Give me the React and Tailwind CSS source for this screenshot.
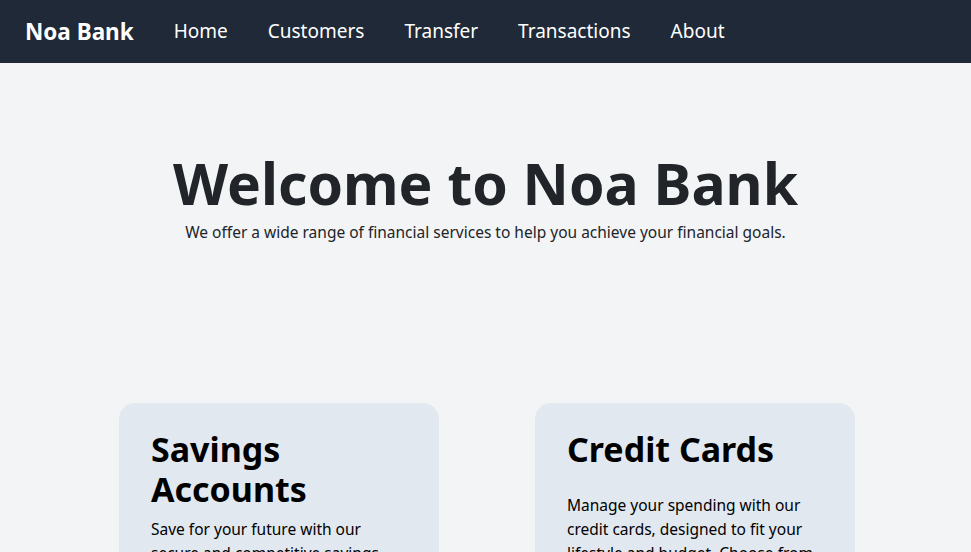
export default function App() {
  return (
    <div className="min-h-screen bg-gray-100 font-['Noto_Sans',sans-serif]">
      {/* Nav */}
      <nav className="h-[63px] bg-[#1f2937] px-[25px] flex items-center gap-10 text-white">
        <span className="text-[22.5px] font-bold">Noa Bank</span>
        <a className="text-[19px]">Home</a>
        <a className="text-[19px]">Customers</a>
        <a className="text-[19px]">Transfer</a>
        <a className="text-[19px]">Transactions</a>
        <a className="text-[19px]">About</a>
      </nav>

      {/* Hero */}
      <section className="pt-[92px] text-center text-[#212529]">
        <h1 className="text-[57px] font-bold leading-none">Welcome to Noa Bank</h1>
        <p className="mt-[10px] text-[15.5px] leading-5">
          We offer a wide range of financial services to help you achieve your financial goals.
        </p>
      </section>

      {/* Cards */}
      <section className="mt-[161px] flex justify-center gap-24 pl-[3px]">
        <div className="w-80 rounded-2xl bg-[#e2e8f0] px-8 pt-[26px] pb-8 text-black">
          <h2 className="text-[34px] leading-10 font-bold mb-2">Savings Accounts</h2>
          <p className="text-[15.5px] leading-6">
            Save for your future with our secure and competitive savings accounts.
          </p>
        </div>
        <div className="w-80 rounded-2xl bg-[#e2e8f0] px-8 pt-[26px] pb-8 text-black">
          <h2 className="text-[34px] leading-10 font-bold mb-6">Credit Cards</h2>
          <p className="text-[15.5px] leading-6">
            Manage your spending with our credit cards, designed to fit your lifestyle and budget. Choose from a variety of options.
          </p>
        </div>
      </section>
    </div>
  );
}
